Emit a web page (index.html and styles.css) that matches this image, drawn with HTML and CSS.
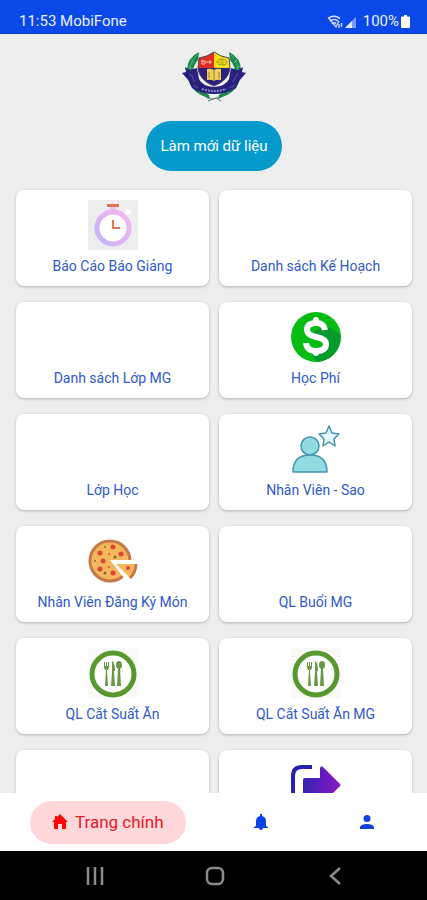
FILE: index.html
```html
<!DOCTYPE html>
<html lang="vi">
<head>
    <meta charset="UTF-8">
    <meta name="viewport" content="width=device-width, initial-scale=1.0">
    <title>Trang chính</title>
    <link rel="stylesheet" href="styles.css">
</head>
<body>
    <header class="status-bar">
        <span>11:53 MobiFone</span>
        <div class="status-icons">
            <svg width="16" height="14" viewBox="0 0 16 14" fill="none" stroke="#d5e0ff" stroke-width="1.6">
                <path d="M1 3.5Q7 -1 13 3.5M3 6Q7 3 11 6M5 8.5Q7 7 9 8.5"/>
                <path d="M2 3.5L9 12L12 6" stroke-width="1.2"/>
                <path d="M12 13V9M14.500 8V12" stroke-width="1.4"/>
            </svg>
            <svg width="12" height="12" viewBox="0 0 12 12">
                <path d="M0 12L11 1V12Z" fill="#7d9df5"/>
                <path d="M0 12L7 5V12Z" fill="#e4ebff"/>
            </svg>
            <span class="battery-text">100%</span>
            <svg width="9" height="13" viewBox="0 0 9 13" fill="#fff">
                <path d="M3 0H6V1.500H8Q9 1.500 9 2.500V12Q9 13 8 13H1Q0 13 0 12V2.500Q0 1.500 1 1.500H3Z"/>
            </svg>
        </div>
    </header>

    <main class="content">
        <svg class="logo" width="64" height="54" viewBox="0 0 64 54">
            <!-- laurel -->
            <g fill="#168a48">
                <path d="M17 2Q5 8 5 20Q5 38 19 45L28 49L27 45Q12 38 11 22Q11 16 16 10Z"/>
                <path d="M47 2Q59 8 59 20Q59 38 45 45L36 49L37 45Q52 38 53 22Q53 16 48 10Z"/>
            </g>
            <g fill="none" stroke="#7fbf9a" stroke-width="0.6">
                <path d="M15 5Q7 13 8 22M9 10L12 13M6 16L10 18M17 43L19 40"/>
                <path d="M49 5Q57 13 56 22M55 10L52 13M58 16L54 18M47 43L45 40"/>
            </g>
            <!-- ribbon -->
            <path d="M3 17L8 20L15 18L17 29Q20 36 32 37Q44 36 47 29L49 18L56 20L61 17L60 22L64 23L57 31L54 38Q45 44 32 44Q19 44 10 38L7 31L0 23L4 22Z" fill="#29217d"/>
            <path d="M8 23L13 32M56 23L51 32M11 35L16 38M53 35L48 38" stroke="#5b559f" fill="none"/>
            <path d="M20 39Q32 43 44 39" stroke="#8f8abf" stroke-width="2" stroke-dasharray="2 1" fill="none"/>
            <!-- shield -->
            <path d="M17 8Q25 7 32 2V19H16Z" fill="#e32b23"/>
            <path d="M47 8Q39 7 32 2V19H48Z" fill="#f8df16"/>
            <path d="M16 18H48Q47 30 32 36Q17 30 16 18Z" fill="#29217d"/>
            <path d="M17 8Q25 7 32 2Q39 7 47 8L48 18Q47 30 32 36Q17 30 16 18Z" fill="none" stroke="#4d4255"/>
            <path d="M25 19Q29 18 32 20Q35 18 39 19V30Q35 29 32 31Q29 29 25 30Z" fill="#efcf55"/>
            <path d="M32 20V31M27 22V28M37 22V28" stroke="#84683d" stroke-width="0.8" fill="none"/>
            <path d="M20 10V14H23V11H20M24 12H30M28 10V14" stroke="#ffc4ac" fill="none"/>
            <ellipse cx="40" cy="12" rx="5" ry="3" fill="none" stroke="#a49b29"/>
            <path d="M36 12H44M38 10H42M38 14H42" stroke="#a49b29" stroke-width="0.8"/>
            <path d="M26 51L34 48L39 51M25 48L31 49L38 47" stroke="#637c76" fill="none"/>
        </svg>

        <button class="refresh-btn" type="button">Làm mới dữ liệu</button>

        <div class="grid">
            <a class="card" href="#">
                <svg class="card-icon" viewBox="0 0 50 50">
                    <defs>
                        <linearGradient id="clockRing" x1="0" y1="1" x2="1" y2="0">
                            <stop offset="0" stop-color="#bdb5f6"/>
                            <stop offset="0.5" stop-color="#dfb3f3"/>
                            <stop offset="1" stop-color="#f4b8ed"/>
                        </linearGradient>
                    </defs>
                    <rect width="50" height="50" fill="#ededed"/>
                    <circle cx="40" cy="12" r="3" fill="#fff"/>
                    <path d="M22 7H28V11H22Z" fill="#eec8df"/>
                    <rect x="19" y="4" width="12" height="3" fill="#dd7355"/>
                    <circle cx="25" cy="28" r="16" fill="#fff" stroke="url(#clockRing)" stroke-width="5"/>
                    <path d="M25 20V28H32" fill="none" stroke="#df7654" stroke-width="2"/>
                </svg>
                <span class="card-label">Báo Cáo Báo Giảng</span>
            </a>
            <a class="card" href="#">
                <span class="card-label">Danh sách Kế Hoạch</span>
            </a>
            <a class="card" href="#">
                <span class="card-label">Danh sách Lớp MG</span>
            </a>
            <a class="card" href="#">
                <svg class="card-icon" viewBox="0 0 50 50">
                    <circle cx="25" cy="25" r="25" fill="#05bd12"/>
                    <path d="M34 13L49 22Q51 32 44 41Q37 49 26 50L21 43L30 36L33 29L21 21Z" fill="#079a2c"/>
                    <path d="M34 18Q33 11 25 11Q16 11 16 18Q16 23 25 25Q35 27 35 32Q35 39 25 39Q16 39 15 31" fill="none" stroke="#fff" stroke-width="6"/>
                    <path d="M25 8V11M25 39V41" fill="none" stroke="#fff" stroke-width="6" stroke-linecap="round"/>
                </svg>
                <span class="card-label">Học Phí</span>
            </a>
            <a class="card" href="#">
                <span class="card-label">Lớp Học</span>
            </a>
            <a class="card" href="#">
                <svg class="card-icon" viewBox="0 0 50 50" stroke="#4495ad" stroke-width="1.5" stroke-linejoin="round">
                    <path d="M2 48Q2 31 19 31Q36 31 36 48Z" fill="#91dce3"/>
                    <circle cx="19" cy="22" r="9" fill="#91dce3"/>
                    <path d="M38 2L41 9L48 10L43 15L44 22L38 18L32 22L33 15L28 10L35 9Z" fill="#e3f7fb"/>
                </svg>
                <span class="card-label">Nhân Viên - Sao</span>
            </a>
            <a class="card" href="#">
                <svg class="card-icon" viewBox="0 0 50 50">
                    <circle cx="22" cy="25" r="20" fill="#f5b75b" stroke="#c5784a" stroke-width="3"/>
                    <path d="M22 24L50 24L46 43L39 46Z" fill="#fff"/>
                    <path d="M28 28L48 28Q48 36 42 42Z" fill="#f5b75b"/>
                    <path d="M48 28Q48 36 42 42" fill="none" stroke="#c5784a" stroke-width="3"/>
                    <g fill="#dc4638">
                        <circle cx="25" cy="11" r="2.500"/>
                        <circle cx="12" cy="17" r="2.500"/>
                        <circle cx="33" cy="18" r="2.500"/>
                        <circle cx="15" cy="25" r="2.500"/>
                        <circle cx="12" cy="33" r="2.500"/>
                        <circle cx="25" cy="37" r="2.500"/>
                        <circle cx="40" cy="32" r="2"/>
                        <circle cx="21" cy="18" r="1"/>
                        <circle cx="21" cy="31" r="1"/>
                    </g>
                    <g fill="#737330">
                        <circle cx="17" cy="11" r="1"/>
                        <circle cx="7" cy="25" r="1"/>
                        <circle cx="27" cy="21" r="1.500"/>
                        <circle cx="17" cy="37" r="1.500"/>
                    </g>
                </svg>
                <span class="card-label">Nhân Viên Đăng Ký Món</span>
            </a>
            <a class="card" href="#">
                <span class="card-label">QL Buổi MG</span>
            </a>
            <a class="card" href="#">
                <svg class="card-icon" viewBox="0 0 50 50">
                    <rect width="50" height="50" fill="#f9faf7"/>
                    <circle cx="25" cy="26" r="21" fill="#fff" stroke="#57992f" stroke-width="5"/>
                    <g fill="#6b9749">
                        <path d="M16 14H17V18H18V14H19V18H20V14H21V19Q21 22 19 22L20 38H17L18 22Q16 22 16 19Z"/>
                        <path d="M24 13Q27 14 27 23H26L27 38H23L24 23Z"/>
                        <ellipse cx="31" cy="17" rx="3" ry="4"/>
                        <path d="M30 20H32L33 38H29Z"/>
                    </g>
                </svg>
                <span class="card-label">QL Cắt Suất Ăn</span>
            </a>
            <a class="card" href="#">
                <svg class="card-icon" viewBox="0 0 50 50">
                    <rect width="50" height="50" fill="#f9faf7"/>
                    <circle cx="25" cy="26" r="21" fill="#fff" stroke="#57992f" stroke-width="5"/>
                    <g fill="#6b9749">
                        <path d="M16 14H17V18H18V14H19V18H20V14H21V19Q21 22 19 22L20 38H17L18 22Q16 22 16 19Z"/>
                        <path d="M24 13Q27 14 27 23H26L27 38H23L24 23Z"/>
                        <ellipse cx="31" cy="17" rx="3" ry="4"/>
                        <path d="M30 20H32L33 38H29Z"/>
                    </g>
                </svg>
                <span class="card-label">QL Cắt Suất Ăn MG</span>
            </a>
            <a class="card" href="#"></a>
            <a class="card" href="#">
                <svg class="card-icon" viewBox="0 0 50 50">
                    <defs>
                        <linearGradient id="arrowFill" x1="0" y1="0" x2="1" y2="0">
                            <stop offset="0" stop-color="#3423b3"/>
                            <stop offset="1" stop-color="#8c16c4"/>
                        </linearGradient>
                    </defs>
                    <path d="M21 7H11Q2 7 2 16V41Q2 48 9 48H21" fill="none" stroke="#2720b0" stroke-width="4"/>
                    <path d="M14 18H29V8Q30 5 32 7L49 24Q50 25 49 26L32 43Q30 45 29 42V34H14Q12 34 12 32V20Q12 18 14 18Z" fill="url(#arrowFill)"/>
                </svg>
            </a>
        </div>
    </main>

    <nav class="tab-bar">
        <a class="tab tab-active" href="#">
            <svg width="16" height="16" viewBox="0 0 16 16" fill="#f80808">
                <path d="M8 0L16 8H14V15H10V10H6V15H2V8H0L3 5V2H5V3Z"/>
            </svg>
            Trang chính
        </a>
        <a class="tab" href="#" aria-label="Thông báo">
            <svg width="14" height="16" viewBox="0 0 14 16" fill="#0b43e4">
                <path d="M6 0H8V2Q12 3 12 7V12L14 13V14H0V13L2 12V7Q2 3 6 2Z"/>
                <path d="M5 14H9Q9 16 7 16Q5 16 5 14Z"/>
            </svg>
        </a>
        <a class="tab" href="#" aria-label="Tài khoản">
            <svg width="14" height="14" viewBox="0 0 14 14" fill="#1240dc">
                <circle cx="7" cy="3.500" r="3.500"/>
                <path d="M0 14V12Q1 9 7 9Q13 9 14 12V14Z"/>
            </svg>
        </a>
    </nav>

    <footer class="system-bar">
        <button type="button" aria-label="Recents">
            <svg width="18" height="18" viewBox="0 0 18 18" stroke="#8b8b8b" stroke-width="2.500">
                <path d="M2 0V18M9 0V18M16 0V18"/>
            </svg>
        </button>
        <button type="button" aria-label="Home">
            <svg width="20" height="20" viewBox="0 0 20 20" fill="none" stroke="#8b8b8b" stroke-width="2.500">
                <rect x="2" y="2" width="16" height="16" rx="5"/>
            </svg>
        </button>
        <button type="button" aria-label="Back">
            <svg width="12" height="18" viewBox="0 0 12 18" fill="none" stroke="#8b8b8b" stroke-width="2.500">
                <path d="M11 1L2 9L11 17"/>
            </svg>
        </button>
    </footer>
</body>
</html>
```

FILE: styles.css
```css
* {
    box-sizing: border-box;
}
body {
    margin: 0;
    height: 100vh;
    display: flex;
    flex-direction: column;
    font-family: Roboto, "Noto Sans", sans-serif;
    background-color: #eee;
}
svg {
    display: block;
    flex-shrink: 0;
}
a {
    text-decoration: none;
}
.status-bar {
    display: flex;
    justify-content: space-between;
    align-items: center;
    padding: 11px 17px 1px 19px;
    background-color: #0a49e8;
    border-bottom: 1px solid #0838b8;
    color: #e8eeff;
    font-size: 15px;
    line-height: 21px;
}
.status-icons {
    display: flex;
    align-items: center;
    gap: 2px;
}
.battery-text {
    padding-left: 4px;
}
.content {
    flex: 1;
    min-height: 0;
    overflow: hidden;
    display: flex;
    flex-direction: column;
    align-items: center;
    padding: 16px 15px 0 16px;
}
.logo {
    margin-bottom: 17px;
}
.refresh-btn {
    flex-shrink: 0;
    height: 50px;
    padding: 0 14px;
    border: none;
    border-radius: 25px;
    background-color: #059acb;
    color: #fff;
    font-family: inherit;
    font-size: 15px;
    cursor: pointer;
}
.grid {
    width: 100%;
    margin-top: 19px;
    display: grid;
    grid-template-columns: 1fr 1fr;
    gap: 16px 10px;
}
.card {
    display: flex;
    flex-direction: column;
    align-items: center;
    height: 96px;
    padding: 10px 0 12px;
    border-radius: 8px;
    background-color: #fff;
    box-shadow: 0 1px 3px rgba(0, 0, 0, 0.25);
}
.card-icon {
    width: 50px;
    height: 50px;
}
.card-label {
    margin-top: auto;
    color: #2f59cb;
    font-size: 14px;
    line-height: 16px;
}
.tab-bar {
    display: flex;
    align-items: center;
    height: 58px;
    padding: 0 7px 0 30px;
    background-color: #fff;
}
.tab {
    flex: 1;
    display: flex;
    justify-content: center;
    align-items: center;
}
.tab-active {
    flex: none;
    gap: 7px;
    height: 43px;
    margin-right: 22px;
    padding: 0 22px;
    border-radius: 22px;
    background-color: #ffd7d9;
    color: #dc2029;
    font-size: 17px;
}
.system-bar {
    display: flex;
    height: 49px;
    padding: 0 32px 0 35px;
    background-color: #000;
}
.system-bar button {
    flex: 1;
    display: flex;
    justify-content: center;
    align-items: center;
    padding: 0;
    border: none;
    background: none;
}
```
